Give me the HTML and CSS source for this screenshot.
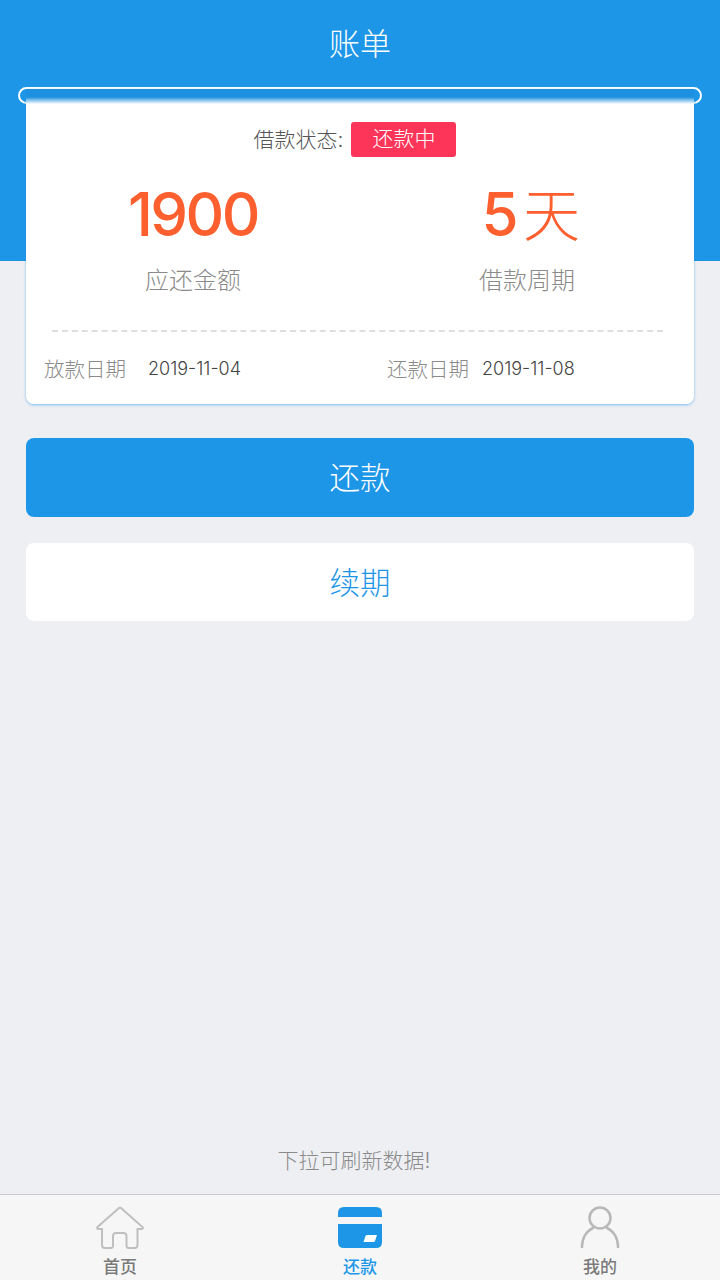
FILE: index.html
```html
<!DOCTYPE html>
<html>
<head>
  <title>账单</title>
  <link rel="stylesheet" href="styles.css">
</head>
<body>
  <div class="page">
    <div class="header">
      <h1>账单</h1>
    </div>

    <div class="main">
      <div class="card-wrap">
        <div class="slot"></div>
        <div class="card">
          <div class="status">
            <span class="status-label">借款状态:</span>
            <span class="status-tag">还款中</span>
          </div>
          <div class="figures">
            <div class="figure">
              <div class="figure-value">1900</div>
              <div class="figure-label">应还金额</div>
            </div>
            <div class="figure">
              <div class="figure-value figure-days">5<span class="unit">天</span></div>
              <div class="figure-label">借款周期</div>
            </div>
          </div>
          <div class="divider"></div>
          <div class="dates">
            <div class="date date-left"><span class="date-label">放款日期</span><span class="date-value">2019-11-04</span></div>
            <div class="date date-right"><span class="date-label">还款日期</span><span class="date-value">2019-11-08</span></div>
          </div>
        </div>
      </div>

      <button class="btn btn-primary" type="button">还款</button>
      <button class="btn btn-plain" type="button">续期</button>
    </div>

    <div class="hint">下拉可刷新数据!</div>

    <div class="tabbar">
      <div class="tab">
        <svg class="tab-icon" width="48" height="44" viewBox="0 0 48 44">
          <path d="M1.500 22 L23 3 Q24 2 25 3 L46.500 22 Q47.500 24 45.500 24 L41.500 24 L41.500 40 Q41.500 43 38.500 43 L33 43 Q30.500 43 30.500 40.500 L30.500 31 Q30.500 28 27.500 28 L20 28 Q17 28 17 31 L17 40.500 Q17 43 14.500 43 L9 43 Q6 43 6 40 L6 24 L2.500 24 Q0.500 24 1.500 22 Z" fill="none" stroke="#bfbfbf" stroke-width="2"/>
        </svg>
        <span class="tab-text">首页</span>
      </div>
      <div class="tab tab-active">
        <svg class="tab-icon" width="48" height="44" viewBox="0 0 48 44">
          <path d="M2 12 L2 8 Q2 2 8 2 L40 2 Q46 2 46 8 L46 12 Z" fill="#1d96e8"/>
          <path d="M2 19 L46 19 L46 37 Q46 43 40 43 L8 43 Q2 43 2 37 Z" fill="#1d96e8"/>
          <path d="M29.500 31 Q30 30 31 30 L41 30 L39 36 Q38.500 37 37.500 37 L27.500 37 Z" fill="#fff"/>
        </svg>
        <span class="tab-text">还款</span>
      </div>
      <div class="tab">
        <svg class="tab-icon" width="48" height="44" viewBox="0 0 48 44">
          <circle cx="24" cy="13" r="10.500" fill="none" stroke="#b8b8b8" stroke-width="2.500"/>
          <path d="M6 42 C6 33 10.500 26 17 23 M31 23 C37.500 26 42 33 42 42" fill="none" stroke="#b8b8b8" stroke-width="2.500" stroke-linecap="round"/>
        </svg>
        <span class="tab-text">我的</span>
      </div>
    </div>
  </div>
</body>
</html>
```

FILE: styles.css
```css
* {
  box-sizing: border-box;
}

body {
  margin: 0;
  font-family: "Inter", "Noto Sans CJK SC", sans-serif;
  background-color: #eeeff3;
}

.page {
  position: relative;
  display: flex;
  flex-direction: column;
  width: 720px;
  height: 1280px;
  overflow: hidden;
}

.header {
  height: 261px;
  flex-shrink: 0;
  background-color: #1d96e8;
}

.header h1 {
  margin: 0;
  padding-top: 22px;
  font-size: 31px;
  line-height: 44px;
  font-weight: 300;
  color: #fff;
  text-align: center;
}

.main {
  display: flex;
  flex-direction: column;
  margin-top: -172px;
  padding: 0 26px;
}

.card-wrap {
  position: relative;
}

.slot {
  position: absolute;
  left: -8px;
  right: -8px;
  top: -2px;
  height: 17px;
  border: 2px solid #fff;
  border-radius: 9px;
}

.card {
  position: relative;
  height: 315px;
  padding: 33px 18px 0;
  background: linear-gradient(#1d90df 8px, #fff 15px);
  border-radius: 0 0 8px 8px;
  box-shadow: 0 1px 3px rgba(29, 150, 232, 0.55);
}

.status {
  display: flex;
  justify-content: center;
  align-items: center;
  gap: 8px;
  padding-right: 10px;
}

.status-label {
  padding-bottom: 3px;
  font-size: 21px;
  font-weight: 300;
  color: #555;
}

.status-tag {
  width: 105px;
  height: 35px;
  font-size: 21px;
  font-weight: 300;
  line-height: 34px;
  text-align: center;
  color: #fff;
  background-color: #fd3559;
  border-radius: 3px;
}

.figures {
  display: flex;
  margin: 19px -18px 0;
}

.figure {
  width: 334px;
  text-align: center;
}

.figure-value {
  height: 80px;
  font-size: 60px;
  font-weight: 500;
  line-height: 76px;
  letter-spacing: -2.5px;
  color: #fd5f2f;
}

.figure-days {
  padding-left: 5px;
}

.unit {
  margin-left: 7px;
  font-size: 57px;
  font-weight: 300;
}

.figure-label {
  padding-top: 7px;
  font-size: 24px;
  font-weight: 300;
  line-height: 36px;
  color: #8a8a8a;
}

.divider {
  margin: 31px 13px 0 8px;
  border-top: 2px dashed #dedede;
}

.dates {
  display: flex;
  margin-top: 20px;
}

.date {
  display: flex;
  align-items: center;
  height: 32px;
}

.date-left {
  width: 343px;
}

.date-label {
  width: 104px;
  padding-bottom: 1px;
  font-size: 20.500px;
  font-weight: 300;
  color: #8a8a8a;
}

.date-right .date-label {
  width: 95px;
}

.date-value {
  font-size: 18px;
  font-weight: 300;
  color: #444;
}

.btn {
  display: block;
  width: 100%;
  height: 78px;
  padding: 0 0 3px;
  font-family: inherit;
  font-size: 30.500px;
  font-weight: 300;
  border: none;
  border-radius: 8px;
}

.btn-primary {
  height: 79px;
  margin-top: 34px;
  color: #fff;
  background-color: #1d96e8;
}

.btn-plain {
  margin-top: 26px;
  color: #1d96e8;
  background-color: #fff;
}

.hint {
  position: absolute;
  left: 0;
  right: 12px;
  bottom: 103px;
  font-size: 21px;
  font-weight: 300;
  line-height: 32px;
  text-align: center;
  color: #8a8a8a;
}

.tabbar {
  position: absolute;
  left: 0;
  right: 0;
  bottom: 0;
  display: flex;
  height: 86px;
  background-color: #f6f6f6;
  border-top: 1px solid #c9c9cc;
}

.tab {
  flex: 1;
  display: flex;
  flex-direction: column;
  align-items: center;
  padding-top: 10px;
  color: #7a7a7a;
}

.tab-icon {
  display: block;
}

.tab-text {
  margin-top: 6px;
  font-size: 17px;
  font-weight: 500;
  line-height: 24px;
}

.tab-active {
  color: #1d96e8;
}
```
